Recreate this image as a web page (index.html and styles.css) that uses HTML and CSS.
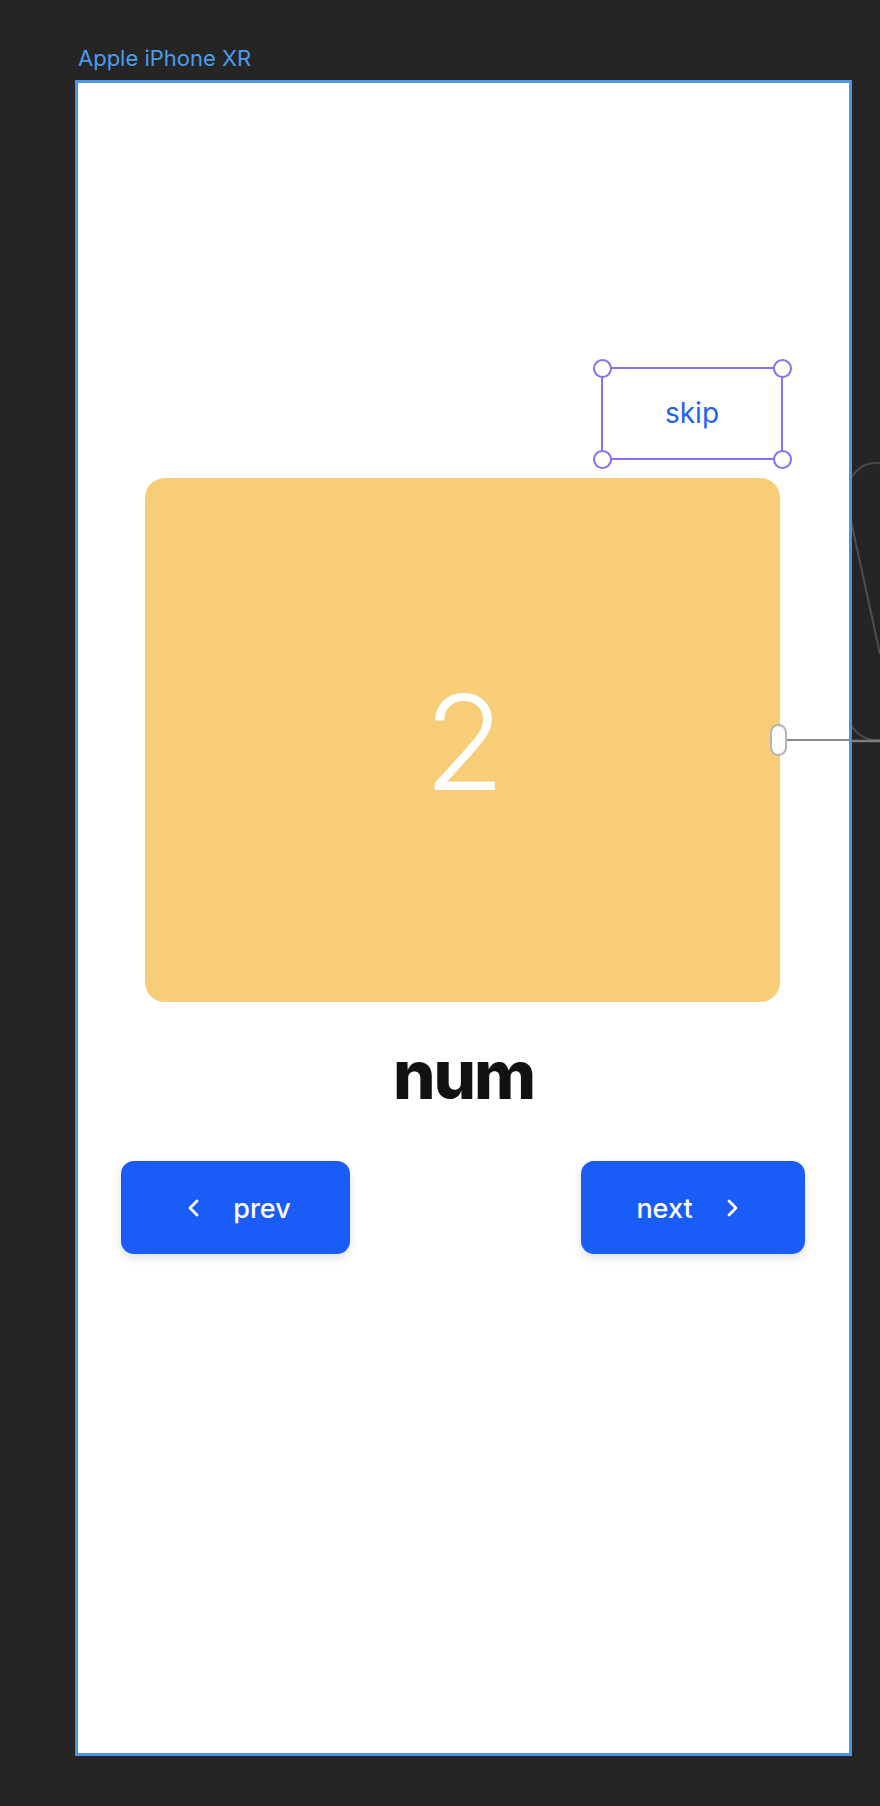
FILE: index.html
```html
<!DOCTYPE html>
<html lang="en">
<head>
<meta charset="utf-8">
<title>Apple iPhone XR</title>
<link rel="stylesheet" href="styles.css">
</head>
<body>
<div class="canvas">
  <div class="device-label">Apple iPhone XR</div>
  <div class="frame">
    <div class="skip-row">
      <div class="skip-box">
        <span class="skip-text">skip</span>
        <span class="knob knob-tl"></span>
        <span class="knob knob-tr"></span>
        <span class="knob knob-bl"></span>
        <span class="knob knob-br"></span>
      </div>
    </div>
    <div class="card">
      <span class="card-num">2</span>
      <span class="card-handle"></span>
      <span class="card-link"></span>
    </div>
    <div class="title">num</div>
    <div class="buttons">
      <button class="btn btn-prev">
        <svg class="chev" viewBox="0 0 14 18" width="14" height="18"><path d="M11 2 L4 9 L11 16" fill="none" stroke="#fff" stroke-width="2.8" stroke-linecap="round" stroke-linejoin="round"/></svg>
        <span>prev</span>
      </button>
      <button class="btn btn-next">
        <span>next</span>
        <svg class="chev" viewBox="0 0 14 18" width="14" height="18"><path d="M3 2 L10 9 L3 16" fill="none" stroke="#fff" stroke-width="2.8" stroke-linecap="round" stroke-linejoin="round"/></svg>
      </button>
    </div>
  </div>
  <svg class="outside" viewBox="0 0 28 320" width="28" height="320">
    <path d="M-4 41 A28 28 0 0 1 24 13 L40 13" stroke="#4a4a4a" stroke-width="2" fill="none"/>
    <path d="M-4 262 A28 28 0 0 0 24 290 L40 290" stroke="#4a4a4a" stroke-width="2" fill="none"/>
    <path d="M-1 71 L28 204" stroke="#4f4f4f" stroke-width="2" fill="none"/>
    <path d="M0 291 L28 291" stroke="#7d7d7d" stroke-width="2.5" fill="none"/>
  </svg>
</div>
</body>
</html>
```

FILE: styles.css
```css
html, body {
  margin: 0;
  padding: 0;
  background: #252525;
}

body {
  width: 880px;
  height: 1806px;
  overflow: hidden;
  font-family: Inter, "Noto Sans", "Liberation Sans", sans-serif;
}

.canvas {
  position: relative;
  padding: 46px 0 0 75px;
}

.device-label {
  margin-left: 3px;
  font-size: 22px;
  line-height: 24px;
  color: #4b9cec;
  height: 24px;
  margin-bottom: 10px;
}

.frame {
  position: relative;
  z-index: 1;
  box-sizing: border-box;
  width: 777px;
  height: 1676px;
  border: 3px solid #4a97ea;
  background: #ffffff;
  display: flex;
  flex-direction: column;
  padding-top: 284px;
}

.skip-row {
  display: flex;
  justify-content: flex-end;
  padding-right: 66px;
}

.skip-box {
  position: relative;
  box-sizing: border-box;
  width: 182px;
  height: 93px;
  border: 2px solid #8b6ef3;
  display: flex;
  align-items: center;
  justify-content: center;
}

.skip-text {
  font-size: 28px;
  color: #1f62f2;
  line-height: 1;
  margin-top: -1px;
}

.knob {
  position: absolute;
  width: 15px;
  height: 15px;
  border: 2px solid #8b6ef3;
  border-radius: 50%;
  background: #fff;
}
.knob-tl { left: -10.5px; top: -10.5px; }
.knob-tr { right: -10.5px; top: -10.5px; }
.knob-bl { left: -10.5px; bottom: -10.5px; }
.knob-br { right: -10.5px; bottom: -10.5px; }

.card {
  position: relative;
  margin: 18px 0 0 67px;
  width: 635px;
  height: 524px;
  border-radius: 20px;
  background: #f7cd78;
  display: flex;
  align-items: center;
  justify-content: center;
}

.card-num {
  font-size: 132px;
  font-weight: 300;
  color: #ffffff;
  line-height: 1;
  margin-left: 4px;
  margin-top: 4px;
}

.card-handle {
  position: absolute;
  left: 625px;
  top: 246px;
  box-sizing: border-box;
  width: 17px;
  height: 32px;
  border: 2px solid #b4b4b4;
  border-radius: 9px;
  background: #ffffff;
  z-index: 2;
}

.card-link {
  position: absolute;
  left: 640px;
  top: 261px;
  width: 64px;
  height: 2px;
  background: #8a8a8a;
  z-index: 1;
}

.title {
  margin-top: 38px;
  text-align: center;
  font-size: 67px;
  line-height: 70px;
  font-weight: 800;
  letter-spacing: -2px;
  color: #111111;
}

.buttons {
  display: flex;
  justify-content: space-between;
  padding: 0 44px 0 43px;
  margin-top: 51px;
}

.btn {
  box-sizing: border-box;
  height: 93px;
  border: none;
  border-radius: 13px;
  background: #1a5cf7;
  color: #ffffff;
  font-family: Inter, "Noto Sans", "Liberation Sans", sans-serif;
  font-size: 27px;
  font-weight: 500;
  display: flex;
  align-items: center;
  justify-content: center;
  gap: 33px;
  box-shadow: 0 4px 10px rgba(0, 0, 0, 0.13);
  padding: 0;
}

.btn span {
  line-height: 1;
  margin-top: 2px;
}

.btn-prev {
  width: 229px;
  padding-left: 6px;
}

.btn-next {
  width: 224px;
  padding-right: 10px;
}

.chev {
  display: block;
}

.outside {
  position: absolute;
  left: 852px;
  top: 450px;
  z-index: 0;
}
```
